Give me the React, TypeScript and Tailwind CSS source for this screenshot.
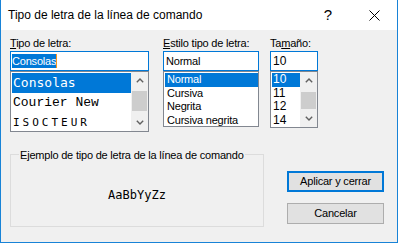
import React from "react";

const Chevron = ({ down }: { down?: boolean }) => (
  <svg width="8" height="5" viewBox="0 0 8 5" className={down ? "rotate-180" : ""}>
    <polyline points="0.8,4.3 4,1.1 7.2,4.3" fill="none" stroke="#606060" strokeWidth="1.4" />
  </svg>
);

function ScrollBar({ thumb }: { thumb: string }) {
  return (
    <div className="w-[17px] h-full bg-[#f0f0f0] flex flex-col shrink-0">
      <div className="h-[17px] flex items-center justify-center shrink-0">
        <Chevron />
      </div>
      <div className={thumb} />
      <div className="flex-1" />
      <div className="h-[17px] flex items-center justify-center shrink-0">
        <Chevron down />
      </div>
    </div>
  );
}

export default function App() {
  return (
    <div className="w-[398px] h-[243px] bg-[#f0f0f0] border-x border-b border-[#1883d7] flex flex-col overflow-hidden text-black font-['Liberation_Sans',Arial,sans-serif] text-[11px] tracking-[-0.2px]">
      {/* Title bar */}
      <div className="h-[30px] bg-white flex items-center shrink-0">
        <span className="pl-[7px] text-[12px] tracking-normal">Tipo de letra de la línea de comando</span>
        <div className="ml-auto flex h-full">
          <div className="w-[46px] flex items-center justify-center text-[15px] tracking-normal">?</div>
          <div className="w-[46px] flex items-center justify-center">
            <svg width="11" height="11" viewBox="0 0 11 11">
              <path d="M0.5 0.5 L10.5 10.5 M10.5 0.5 L0.5 10.5" stroke="#000" strokeWidth="1" />
            </svg>
          </div>
        </div>
      </div>

      <div className="pl-[9px] pt-[6px] flex flex-col">
        <div className="flex items-start">
          {/* Font column */}
          <div className="w-[139px] flex flex-col shrink-0">
            <div className="h-[15px] leading-[14px]">
              <u>T</u>ipo de letra:
            </div>
            <div className="h-[20px] border border-[#0078d7] bg-white flex items-center pl-[1px]">
              <span className="bg-[#0078d7] text-white leading-[14px] h-[14px]">Consolas</span>
              <span className="w-[1px] h-[14px] bg-[#f7931e]" />
            </div>
            <div className="h-[61px] border border-[#828790] bg-white flex">
              <div className="flex-1 pl-[1px] pt-[1px] overflow-hidden flex flex-col">
                <div className="h-[20px] shrink-0 leading-[20px] bg-[#0078d7] text-white pl-[1px] font-['DejaVu_Sans_Mono',monospace] text-[13px] tracking-normal">
                  Consolas
                </div>
                <div className="h-[20px] shrink-0 leading-[20px] pl-[1px] font-['Liberation_Mono',monospace] text-[13px] tracking-normal">
                  Courier New
                </div>
                <div className="h-[20px] shrink-0 leading-[20px] pl-[1px] font-['DejaVu_Sans_Mono',monospace] text-[11px] tracking-[3px]">
                  ISOCTEUR
                </div>
              </div>
              <ScrollBar thumb="h-[20px] mt-[2px] mx-[1px] bg-[#cdcdcd] shrink-0" />
            </div>
          </div>

          {/* Style column */}
          <div className="w-[96px] ml-[14px] flex flex-col shrink-0">
            <div className="h-[15px] leading-[14px]">
              <u>E</u>stilo tipo de letra:
            </div>
            <div className="h-[20px] border border-[#0078d7] bg-white flex items-center pl-[2px]">
              Normal
            </div>
            <div className="h-[56px] border border-[#828790] bg-white flex flex-col pt-[1px] pl-[1px] overflow-hidden">
              <div className="h-[13.5px] shrink-0 leading-[13.5px] bg-[#0078d7] text-white pl-[2px]">Normal</div>
              <div className="h-[13.5px] shrink-0 leading-[13.5px] pl-[2px]">Cursiva</div>
              <div className="h-[13.5px] shrink-0 leading-[13.5px] pl-[2px]">Negrita</div>
              <div className="h-[13.5px] shrink-0 leading-[13.5px] pl-[2px]">Cursiva negrita</div>
            </div>
          </div>

          {/* Size column */}
          <div className="w-[48px] ml-[11px] flex flex-col shrink-0">
            <div className="h-[15px] leading-[14px]">
              Ta<u>m</u>año:
            </div>
            <div className="h-[20px] border border-[#0078d7] bg-white flex items-center pl-[2px] text-[12px] tracking-normal">
              10
            </div>
            <div className="h-[57px] border border-[#828790] bg-white flex text-[12px] tracking-normal">
              <div className="flex-1 pl-[1px] pt-[1px] overflow-hidden flex flex-col">
                <div className="h-[13.5px] shrink-0 leading-[13.5px] bg-[#0078d7] text-white pl-[1px]">10</div>
                <div className="h-[13.5px] shrink-0 leading-[13.5px] pl-[1px]">11</div>
                <div className="h-[13.5px] shrink-0 leading-[13.5px] pl-[1px]">12</div>
                <div className="h-[13.5px] shrink-0 leading-[13.5px] pl-[1px]">14</div>
              </div>
              <ScrollBar thumb="h-[17px] mt-[3px] mx-[1px] bg-[#cdcdcd] shrink-0" />
            </div>
          </div>
        </div>

        {/* Bottom row */}
        <div className="flex items-start mt-[22px]">
          <div className="relative w-[254px] h-[73px] border border-[#dcdcdc] flex items-center justify-center pt-[8px] shrink-0">
            <span className="absolute left-[8px] -top-[7px] px-[1px] bg-[#f0f0f0] leading-[14px] whitespace-nowrap">
              Ejemplo de tipo de letra de la línea de comando
            </span>
            <span className="font-['DejaVu_Sans_Mono',monospace] text-[12px] tracking-normal">AaBbYyZz</span>
          </div>
          <div className="ml-[23px] mt-[17px] flex flex-col gap-[11px]">
            <button className="w-[97px] h-[21px] bg-[#e1e1e1] border-2 border-[#0078d7] flex items-center justify-center">
              Aplicar y cerrar
            </button>
            <button className="w-[97px] h-[21px] bg-[#e1e1e1] border border-[#adadad] flex items-center justify-center">
              Cancelar
            </button>
          </div>
        </div>
      </div>
    </div>
  );
}
